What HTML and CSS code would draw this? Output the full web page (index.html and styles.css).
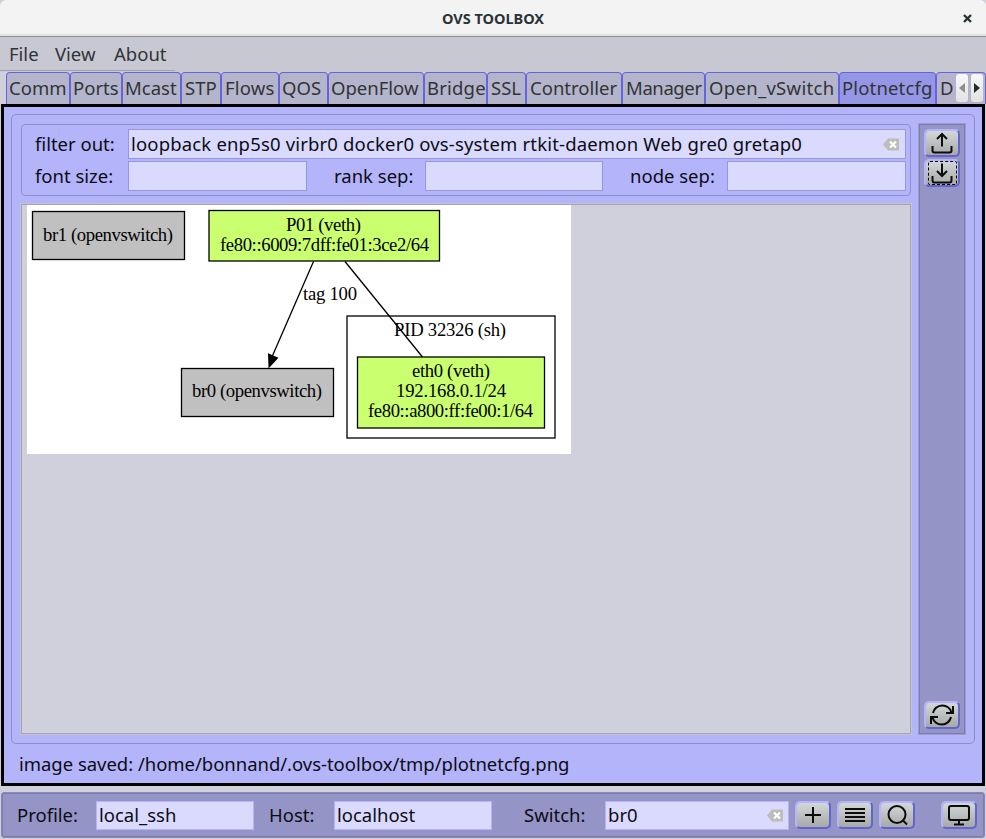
FILE: index.html
```
<!DOCTYPE html>
<html lang="en">
<head>
<meta charset="utf-8">
<title>OVS TOOLBOX</title>
<link rel="stylesheet" href="styles.css">
</head>
<body>
<div class="window">
  <header class="titlebar"><span></span><h1>OVS TOOLBOX</h1>
    <svg class="close" width="9" height="9" viewBox="0 0 9 9"><path d="M1 1l7 7M8 1l-7 7"/></svg>
  </header>
  <nav class="menubar"><span class="file">File</span><span class="view">View</span><span class="about">About</span></nav>
  <div class="tabs">
    <span class="tab t-comm">Comm</span><span class="tab t-ports">Ports</span><span class="tab t-mcast">Mcast</span><span class="tab t-stp">STP</span><span class="tab t-flows">Flows</span><span class="tab t-qos">QOS</span><span class="tab t-openflow">OpenFlow</span><span class="tab t-bridge">Bridge</span><span class="tab t-ssl">SSL</span><span class="tab t-controller">Controller</span><span class="tab t-manager">Manager</span><span class="tab t-ovs">Open_vSwitch</span><span class="tab active t-plot">Plotnetcfg</span><span class="tab last">D</span>
    <div class="scrollers">
      <i class="scroll"><svg width="12" height="28"><path d="M9 9v10l-6-5z" fill="#8e8e8e"/></svg></i>
      <i class="scroll"><svg width="12" height="28"><path d="M3 9v10l6-5z" fill="#222b2e"/></svg></i>
    </div>
  </div>
  <main class="page">
    <section class="group">
      <div class="content">
        <div class="filters">
          <label class="l1">filter out:</label>
          <div class="input wide"><span class="query">loopback enp5s0 virbr0 docker0 ovs-system rtkit-daemon Web gre0 gretap0</span>
            <svg class="clear" width="16" height="13" viewBox="0 0 16 13"><path class="tag" d="M0 6.500L5 0.500H16V12.500H5Z"/><path class="x" d="M7 3.500l6 6M13 3.500l-6 6"/></svg></div>
          <label class="l1">font size:</label><div class="input"></div>
          <label class="l2">rank sep:</label><div class="input"></div>
          <label class="l3">node sep:</label><div class="input"></div>
        </div>
        <div class="canvas">
          <svg class="graph" width="544" height="249" viewBox="27 205 544 249">
            <rect class="paper" x="27" y="205" width="544" height="249"/>
            <rect class="bridge" x="32.500" y="211.500" width="152" height="48"/>
            <rect class="bridge" x="181.500" y="368.500" width="152" height="48"/>
            <rect class="cluster" x="347" y="316" width="208" height="122"/>
            <rect class="veth" x="209" y="210.500" width="230.500" height="50.500"/>
            <rect class="veth" x="357.500" y="357" width="187" height="71"/>
            <path class="edge" d="M313.500 261.500L271.500 358M345 261.500L422.500 357"/>
            <path d="M268 353.300L278.500 357.700L268.500 368.500Z"/>
            <g class="labels">
              <text x="108" y="241" textLength="130">br1 (openvswitch)</text>
              <text x="257" y="397" textLength="130">br0 (openvswitch)</text>
              <text x="323.500" y="231" textLength="75">P01 (veth)</text>
              <text x="324.500" y="251" textLength="209">fe80::6009:7dff:fe01:3ce2/64</text>
              <text x="330" y="300" textLength="54">tag 100</text>
              <text x="450" y="336" textLength="112">PID 32326 (sh)</text>
              <text x="451" y="377" textLength="78">eth0 (veth)</text>
              <text x="451" y="397" textLength="110">192.168.0.1/24</text>
              <text x="450.500" y="417" textLength="165">fe80::a800:ff:fe00:1/64</text>
            </g>
          </svg>
        </div>
      </div>
      <aside class="side">
        <button class="btn"><svg width="22" height="22" viewBox="0 0 22 22"><path d="M1.500 14v4.500q0 2 2 2h15q2 0 2-2V14M11 14.500V2M6 7l5-5 5 5"/></svg></button>
        <button class="btn focus"><svg width="22" height="22" viewBox="0 0 22 22"><path d="M1.500 14v4.500q0 2 2 2h15q2 0 2-2V14M11 1.500V14M6 9l5 5 5-5"/></svg></button>
        <button class="btn refresh"><svg width="26" height="22" viewBox="0 0 26 22"><path d="M4 9A9.500 9.500 0 0 1 22.500 8.500M24 2v7h-7M22 13A9.500 9.500 0 0 1 3.500 13.500M2 20v-7h7"/></svg></button>
      </aside>
    </section>
    <p class="status">image saved: /home/bonnand/.ovs-toolbox/tmp/plotnetcfg.png</p>
  </main>
  <footer class="bottom">
    <label class="b1">Profile:</label><div class="input"><span class="v1">local_ssh</span></div>
    <label class="b2">Host:</label><div class="input"><span class="v2">localhost</span></div>
    <label class="b3">Switch:</label><div class="input switch"><span>br0</span>
      <svg class="clear" width="16" height="13" viewBox="0 0 16 13"><path class="tag" d="M0 6.500L5 0.500H16V12.500H5Z"/><path class="x" d="M7 3.500l6 6M13 3.500l-6 6"/></svg></div>
    <button class="btn"><svg width="22" height="22" viewBox="0 0 22 22"><path d="M3 11h16M11 3v16"/></svg></button>
    <button class="btn"><svg width="22" height="22" viewBox="0 0 22 22"><path d="M1 5h20M1 9h20M1 13h20M1 17h20"/></svg></button>
    <button class="btn"><svg width="22" height="22" viewBox="0 0 22 22"><circle cx="11" cy="10.500" r="8.500"/><path d="M16.500 16l4.500 4.500"/></svg></button>
    <button class="btn monitor"><svg width="24" height="22" viewBox="0 0 24 22"><rect x="2" y="2" width="20" height="14" rx="2"/><path d="M12 16v4M7 20.500h10"/></svg></button>
  </footer>
</div>
</body>
</html>
```
FILE: styles.css
```
* { box-sizing: border-box; }
body {
  margin: 0;
  background: #d0d0dc;
  font: 18.5px/24px "Noto Sans", sans-serif;
  color: #0c0c14;
  overflow: hidden;
}
.window { width: 986px; height: 839px; display: flex; flex-direction: column; white-space: nowrap; }
.titlebar {
  height: 37px; flex: none; display: grid; grid-template-columns: 1fr auto 1fr; align-items: center;
  background: #f3f3f3; border-bottom: 1px solid #8e8e90; border-radius: 6px 6px 0 0;
  box-shadow: inset 0 -2px #e2e2e2;
}
.titlebar h1 { margin: -1px 0 0; font: bold 14.5px/20px "Noto Sans", sans-serif; color: #2b3336; }
.close { justify-self: end; margin: 1px 14px 0 0; fill: none; stroke: #2b3336; stroke-width: 2.4; }
.menubar {
  height: 35px; flex: none; color: #303438; padding: 5px 0 0 9px; display: flex;
  background: linear-gradient(#a4a4b0, #a4a4b0) 0 33px / 175px 1px no-repeat #c8c8d2;
}
.file { width: 46px; }
.view { width: 59px; }
.tabs {
  height: 32px; flex: none; position: relative; display: grid; overflow: hidden; padding-left: 6px;
  background: #d0d0dc;
  grid-template-columns: 64px 52px 59px 40px 58px 49px 96px 63px 39px 96px 83px 134px 97px 50px;
}
.tab {
  border: 1px solid #6464e0; border-bottom: 0; border-radius: 4px 4px 0 0;
  background: #b4b4cb; color: #303438; padding-left: 2px; line-height: 30px;
}
.t-stp { padding-left: 3px; }
.t-bridge, .t-flows { letter-spacing: 0.2px; }
.t-flows, .t-ssl, .t-controller, .t-ovs { padding-left: 3px; }
.t-manager { letter-spacing: -0.4px; padding-left: 3px; }
.t-ovs { letter-spacing: 0.3px; }
.t-plot { letter-spacing: 0.15px; }
.tab.active { background: #9696e6; }
.tab.last { padding-left: 3px; }
.scrollers { position: absolute; right: 3px; top: 2px; display: flex; gap: 3px; }
.scroll { width: 12px; height: 28px; background: linear-gradient(#f8f8f8, #e2e2e2); border-radius: 3px; display: block; }
.scroll svg { display: block; }
.page { height: 682px; flex: none; margin: 0 1px; border: 3px solid #000; background: #b4b4fb; padding: 7px; }
.group {
  height: 630px; border: 1px solid #8e8ec8; border-radius: 5px; padding: 9px 8px 8px 8px;
  display: flex; justify-content: space-between;
}
.content { width: 892px; display: flex; flex-direction: column; gap: 7px; }
.filters {
  height: 72px; margin: 0 1px; border: 1px solid #8e8ec8; border-radius: 4px; padding: 4px 4px 0 13px;
  display: grid; grid-template-columns: 93px 179px 118px 178px 124px 179px; row-gap: 2px; align-content: start;
}
.input { height: 30px; background: #dadafe; border: 1px solid #9696e6; padding-left: 2px; display: flex; align-items: center; justify-content: space-between; }
.wide { grid-column: span 5; width: 778px; padding-right: 6px; }
.query { letter-spacing: 0.17px; }
.filters label { line-height: 30px; }
.l2 { padding-left: 27px; }
.l3 { padding-left: 27px; }
.clear .tag { fill: #bcbcb8; }
.clear .x { stroke: #fff; stroke-width: 2.2; fill: none; }
.canvas { height: 532px; border: 1px solid #c4c4d0; outline: 1px solid #a4a4b4; outline-offset: -2px; background: #d0d0dc; padding: 1px 0 0 6px; }
.graph { display: block; }
.paper { fill: #fff; }
.bridge { fill: #c0c0c0; stroke: #000; stroke-width: 1.3; }
.veth { fill: #caff70; stroke: #000; stroke-width: 1.3; }
.cluster { fill: none; stroke: #000; stroke-width: 1.3; }
.edge { fill: none; stroke: #000; stroke-width: 1.3; }
.labels { font: 18.7px "Liberation Serif", serif; text-anchor: middle; fill: #000; }
.side {
  width: 48px; margin-top: -1px; background: #9494c6; border: 1px solid #9c9ccc; box-shadow: inset 0 0 0 1px #7c7cae;
  padding: 5px; display: flex; flex-direction: column; gap: 2px; height: 612px;
}
.btn {
  width: 36px; height: 28px; padding: 0; flex: none; border: 2px solid; border-color: #b4b4fb #6464d0 #6464d0 #b4b4fb;
  border-radius: 5px; background: linear-gradient(#d2d8d8, #a8a8a8) padding-box; display: grid; place-items: center;
}
.btn svg { fill: none; stroke: #0c0c0c; stroke-width: 2; }
.focus { position: relative; }
.focus::after { content: ""; position: absolute; inset: 0 1px 0 2px; border: 1px dashed #000; border-radius: 2px; }
.refresh { margin-top: auto; }
.status { margin: 7px 0 0 8px; line-height: 26px; letter-spacing: -0.03px; }
.bottom {
  height: 46px; margin: 6px 1px 0; background: #9494c6; border: 1px solid #8888ba; box-shadow: inset 0 0 0 1px #7c7cae; border-radius: 3px;
  display: flex; align-items: center; padding-left: 15px;
}
.bottom .input { width: 158px; height: 29px; border-color: #b4b4fb; }
.b1 { width: 79px; }
.b2 { width: 80px; padding-left: 15px; }
.b3 { width: 113px; padding-left: 32px; }
.bottom .switch { width: 184px; padding-right: 5px; margin-right: 6px; }
.bottom .btn + .btn { margin-left: 6px; }
.bottom .btn.monitor { margin-left: 26px; }
```
